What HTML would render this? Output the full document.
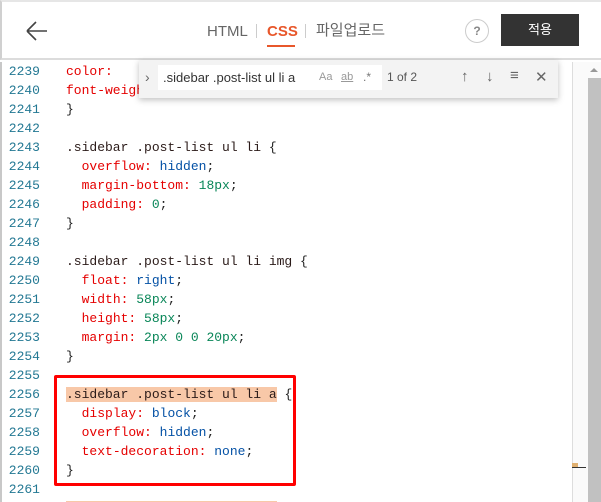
<!DOCTYPE html>
<html><head><meta charset="utf-8"><style>
*{margin:0;padding:0;box-sizing:border-box}
html,body{width:601px;height:502px;overflow:hidden}
body{background:#fff;position:relative;font-family:"Liberation Sans","Noto Sans CJK KR",sans-serif}
.hdr{position:absolute;left:0;top:0;width:601px;height:60px;background:#fff;border-top:2px solid #e6e6e6;border-bottom:2px solid #dcdcdc;border-left:2px solid #d0d0d0}
.tab{position:absolute;top:20px;font-size:15px;line-height:20px;color:#666}
.code{position:absolute;left:0;top:62px;width:572px;height:440px;border-left:2px solid #c8c8c8;font-family:"Liberation Mono",monospace;font-size:13px}
.ln{position:absolute;left:0;width:40px;text-align:right;color:#237893;height:19px;line-height:19px}
.tx{position:absolute;left:64px;height:19px;line-height:19px;white-space:pre;color:#222}
.p{color:#e50000}.v{color:#0451a5}.n{color:#098658}.s{color:#2a1a18}
</style></head><body>
<div class="hdr">
<svg style="position:absolute;left:24px;top:18px" width="22" height="22" viewBox="0 0 22 22"><path d="M1 11H21M1 11L10 2M1 11L10 20" stroke="#444" stroke-width="1.6" fill="none"/></svg>
<span class="tab" style="left:205px">HTML</span>
<span style="position:absolute;left:254px;top:22px;width:1px;height:14px;background:#ccc"></span>
<span class="tab" style="left:265px;color:#e8572b;font-weight:bold">CSS</span>
<span style="position:absolute;left:265px;top:43px;width:28px;height:2px;background:#e8572b"></span>
<span style="position:absolute;left:303px;top:22px;width:1px;height:14px;background:#ccc"></span>
<span class="tab" style="left:314px;top:19px">파일업로드</span>
<div style="position:absolute;left:463px;top:17px;width:24px;height:24px;border:1px solid #ccc;border-radius:50%;text-align:center;line-height:22px;font-size:12px;font-weight:bold;color:#888">?</div>
<div style="position:absolute;left:499px;top:12px;width:78px;height:32px;background:#333;color:#fff;font-size:13px;text-align:center;line-height:32px">적용</div>
</div>
<div class="code">
<div id="c"></div>
</div>
<div style="position:absolute;left:572px;top:62px;width:29px;height:440px;border-left:1px solid #ddd;background:#fafafa"></div>
<div style="position:absolute;left:588px;top:78px;width:13px;height:424px;background:#c1c1c1"></div>
<div style="position:absolute;left:590px;top:68px;width:0;height:0;border-left:4px solid transparent;border-right:4px solid transparent;border-bottom:4px solid #999"></div>
<div style="position:absolute;left:572px;top:463px;width:6px;height:5px;background:#e0b070"></div>
<div style="position:absolute;left:572px;top:467px;width:14px;height:1px;background:#333"></div>
<div style="position:absolute;left:139px;top:60px;width:419px;height:38px;background:#f3f3f3;box-shadow:0 2px 6px rgba(0,0,0,.25)">
<span style="position:absolute;left:6px;top:9px;color:#666;font-size:14px">›</span>
<div style="position:absolute;left:19px;top:5px;width:224px;height:25px;background:#fff;font-size:13px;line-height:25px;padding-left:5px;color:#333">.sidebar .post-list ul li a
<span style="position:absolute;left:161px;font-size:11px;color:#999">Aa</span>
<span style="position:absolute;left:183px;font-size:11px;color:#999;text-decoration:underline">ab</span>
<span style="position:absolute;left:205px;font-size:12px;color:#777">.*</span></div>
<span style="position:absolute;left:248px;top:10px;font-size:12px;color:#555">1 of 2</span>
<span style="position:absolute;left:322px;top:8px;font-size:15px;color:#666">↑</span>
<span style="position:absolute;left:347px;top:8px;font-size:15px;color:#666">↓</span>
<span style="position:absolute;left:371px;top:7px;font-size:15px;color:#666">≡</span>
<span style="position:absolute;left:396px;top:8px;font-size:15px;color:#666">✕</span>
</div>
<div style="position:absolute;left:54px;top:375px;width:242px;height:111px;border:3px solid #f00;border-radius:2px"></div>
<script>
var L=[
['<span class="p">color:</span>'],
['<span class="p">font-weight:</span> <span class="v">bold</span>;'],
['}'],[''],
['<span class="s">.sidebar .post-list ul li</span> {'],
['  <span class="p">overflow:</span> <span class="v">hidden</span>;'],
['  <span class="p">margin-bottom:</span> <span class="n">18px</span>;'],
['  <span class="p">padding:</span> <span class="n">0</span>;'],
['}'],[''],
['<span class="s">.sidebar .post-list ul li img</span> {'],
['  <span class="p">float:</span> <span class="v">right</span>;'],
['  <span class="p">width:</span> <span class="n">58px</span>;'],
['  <span class="p">height:</span> <span class="n">58px</span>;'],
['  <span class="p">margin:</span> <span class="n">2px 0 0 20px</span>;'],
['}'],[''],
['<span class="s" style="background:#f8c8a8">.sidebar .post-list ul li a</span> {'],
['  <span class="p">display:</span> <span class="v">block</span>;'],
['  <span class="p">overflow:</span> <span class="v">hidden</span>;'],
['  <span class="p">text-decoration:</span> <span class="v">none</span>;'],
['}'],[''],
['<span style="background:#f8c8a8">                           </span>']];
var h='';for(var i=0;i<L.length;i++){var y=i*19;var n=2239+i;h+='<div class="ln" style="top:'+y+'px;left:-2px">'+(i<23?n:'')+'</div><div class="tx" style="top:'+y+'px">'+L[i][0]+'</div>';}
document.getElementById('c').innerHTML=h;
</script>
</body></html>
